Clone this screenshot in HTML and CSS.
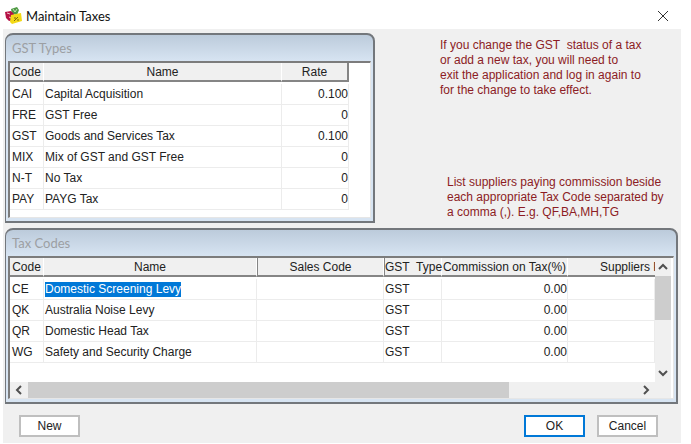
FILE: index.html
```html
<!DOCTYPE html>
<html lang="en">

<head>
    <meta charset="utf-8">
    <meta name="viewport" content="width=device-width, initial-scale=1.0">
    <title>Maintain Taxes</title>
    <link rel="stylesheet" href="styles.css">
</head>

<body>
    <header class="titlebar">
        <svg class="logo" width="18" height="18" viewBox="0 0 18 18" aria-hidden="true">
            <path d="M6 2l6-2 2 3-2 5-5-1z" fill="#4f9a45" />
            <path d="M8 2l2 3 2-3" fill="none" stroke="#c4dfb6" />
            <path d="M0 5l6-1 3 3-1 6-4 1-3-3z" fill="#b51245" />
            <path d="M2 6l3 1M4 10l2 1" stroke="#f0c0cc" />
            <path d="M6 8l10-2 1 8-10 3-2-2z" fill="#f3d916" />
            <path d="M9 14l4-4M9 11h2M12 13h2" stroke="#7a6a10" />
        </svg>
        <h1>Maintain Taxes</h1>
        <button class="close" aria-label="Close">
            <svg width="12" height="12" viewBox="0 0 12 12"><path d="M1 1l10 10M11 1L1 11" /></svg>
        </button>
    </header>

    <main class="dialog">
        <div class="top">
            <section class="panel">
                <h2>GST Types</h2>
                <div class="frame types">
                    <table>
                        <colgroup>
                            <col class="code">
                            <col>
                            <col class="rate">
                        </colgroup>
                        <thead>
                            <tr><th>Code</th><th>Name</th><th class="last">Rate</th></tr>
                        </thead>
                        <tbody>
                            <tr><td>CAI</td><td>Capital Acquisition</td><td class="num">0.100</td></tr>
                            <tr><td>FRE</td><td>GST Free</td><td class="num">0</td></tr>
                            <tr><td>GST</td><td>Goods and Services Tax</td><td class="num">0.100</td></tr>
                            <tr><td>MIX</td><td>Mix of GST and GST Free</td><td class="num">0</td></tr>
                            <tr><td>N-T</td><td>No Tax</td><td class="num">0</td></tr>
                            <tr><td>PAY</td><td>PAYG Tax</td><td class="num">0</td></tr>
                        </tbody>
                    </table>
                </div>
            </section>
            <div class="notes">
                <p>If you change the GST&nbsp; status of a tax<br>or add a new tax, you will need to<br>exit the application and log in again to<br>for the change to take effect.</p>
                <p class="commission">List suppliers paying commission beside<br>each appropriate Tax Code separated by<br>a comma (,). E.g. QF,BA,MH,TG</p>
            </div>
        </div>

        <section class="panel">
            <h2>Tax Codes</h2>
            <div class="frame codes">
                <div class="view">
                    <table>
                        <colgroup>
                            <col class="code">
                            <col>
                            <col class="sales">
                            <col class="type">
                            <col class="comm">
                            <col class="suppliers">
                        </colgroup>
                        <thead>
                            <tr>
                                <th>Code</th>
                                <th>Name</th>
                                <th class="edge">Sales Code</th>
                                <th class="edge">GST&nbsp; Type</th>
                                <th>Commission on Tax(%)</th>
                                <th class="cut">Suppliers P</th>
                            </tr>
                        </thead>
                        <tbody>
                            <tr>
                                <td>CE</td>
                                <td><input class="editing" type="text" aria-label="Name" value="Domestic Screening Levy"></td>
                                <td></td><td>GST</td><td class="num">0.00</td><td></td>
                            </tr>
                            <tr><td>QK</td><td>Australia Noise Levy</td><td></td><td>GST</td><td class="num">0.00</td><td></td></tr>
                            <tr><td>QR</td><td>Domestic Head Tax</td><td></td><td>GST</td><td class="num">0.00</td><td></td></tr>
                            <tr><td>WG</td><td>Safety and Security Charge</td><td></td><td>GST</td><td class="num">0.00</td><td></td></tr>
                        </tbody>
                    </table>
                </div>
                <div class="vscroll">
                    <button aria-label="Scroll up"><svg width="10" height="8" viewBox="0 0 10 8"><path d="M1 6l4-4 4 4" /></svg></button>
                    <div class="track"><div class="thumb"></div></div>
                    <button aria-label="Scroll down"><svg width="10" height="8" viewBox="0 0 10 8"><path d="M1 2l4 4 4-4" /></svg></button>
                </div>
                <div class="hscroll">
                    <button aria-label="Scroll left"><svg width="8" height="10" viewBox="0 0 8 10"><path d="M6 1L2 5l4 4" /></svg></button>
                    <div class="track"><div class="thumb"></div></div>
                    <button aria-label="Scroll right"><svg width="8" height="10" viewBox="0 0 8 10"><path d="M2 1l4 4-4 4" /></svg></button>
                </div>
            </div>
        </section>

        <footer class="actions">
            <button class="btn">New</button>
            <button class="btn primary">OK</button>
            <button class="btn">Cancel</button>
        </footer>
    </main>
</body>

</html>
```

FILE: styles.css
```css
* {
    box-sizing: border-box;
}

body {
    margin: 0;
    background-color: #fff;
    color: #222;
    font-family: "Liberation Sans", Arial, sans-serif;
    font-size: 12px;
}

h1,
h2,
p {
    margin: 0;
    font-weight: normal;
}

button,
input {
    font: inherit;
    color: inherit;
}

/* title bar */
.titlebar {
    display: flex;
    align-items: center;
    height: 29px;
    padding: 2px 20px 0 5px;
}

.titlebar h1 {
    flex: 1;
    margin-left: 3px;
    font-family: Lato, "Segoe UI", sans-serif;
    font-size: 13px;
    color: #111;
}

.close {
    display: flex;
    padding: 2px;
    border: none;
    background: none;
}

.close path {
    stroke: #333;
}

.dialog {
    margin: 0 10px 0 3px;
    padding: 4px 3px 6px 2px;
    background-color: #f0f0f0;
}

.top {
    display: flex;
    margin-bottom: 5px;
}

.top .panel {
    flex: 0 1 370px;
}

/* panels */
.panel {
    padding: 0 2px 3px 2px;
    border: 2px solid #73777c;
    border-left-width: 1px;
    border-radius: 8px 8px 0 0;
    background: linear-gradient(#bccbdb, #d7e4f2 26px);
}

.panel h2 {
    height: 26px;
    padding-left: 4px;
    font-family: Lato, "Segoe UI", sans-serif;
    font-size: 13px;
    line-height: 26px;
    color: #9c9fa3;
}

.frame {
    border-top: 2px solid #7c7c7c;
    border-left: 2px solid #7c7c7c;
    border-right: 1px solid #e6e6e6;
    border-bottom: 1px solid #e6e6e6;
    background-color: #fff;
}

.types {
    padding: 0 21px 7px 0;
}

/* tables */
table {
    width: 100%;
    border-spacing: 0;
    table-layout: fixed;
}

.code {
    width: 34px;
}

.rate {
    width: 67px;
}

.sales {
    width: 127px;
}

.type {
    width: 58px;
}

.comm {
    width: 126px;
}

.suppliers {
    width: 87px;
}

th {
    height: 19px;
    padding: 1px 0 0;
    border-right: 1px solid #fff;
    border-bottom: 2px solid #858585;
    background-color: #f0f0f0;
    font-weight: normal;
    line-height: 16px;
    white-space: nowrap;
}

th.last {
    border-right: 2px solid #858585;
}

th.edge {
    border-left: 1px solid #858585;
}

th.cut {
    padding-left: 32px;
    border-right: none;
    overflow: hidden;
    text-align: left;
}

tbody::before {
    content: "";
    display: table-row;
    height: 2px;
}

td {
    height: 21px;
    padding: 0 2px;
    border-right: 1px solid #ececec;
    border-bottom: 1px solid #ececec;
    line-height: 20px;
    white-space: nowrap;
}

td + td {
    padding: 0 1px;
}

td.num {
    padding: 0;
    text-align: right;
}

.editing {
    display: block;
    width: 136px;
    height: 15px;
    padding: 0;
    border: none;
    background-color: #0078d7;
    color: #fff;
}

/* notes */
.notes {
    flex: 1;
    padding: 5px 0 0 65px;
    line-height: 15px;
    color: #8c1c24;
    white-space: nowrap;
}

.commission {
    margin: 77px 0 0 7px;
}

/* scrolling grid */
.codes {
    display: grid;
    grid-template: 124px 16px / 1fr 16px;
    padding-right: 2px;
}

.view {
    overflow: hidden;
}

.vscroll,
.hscroll {
    display: flex;
    background-color: #f0f0f0;
}

.vscroll {
    flex-direction: column;
}

.hscroll {
    grid-column: 1 / -1;
    padding-right: 16px;
}

.vscroll button,
.hscroll button {
    display: flex;
    align-items: center;
    justify-content: center;
    width: 18px;
    height: 16px;
    padding: 0;
    border: none;
    background: none;
}

.vscroll button {
    width: 16px;
    height: 18px;
}

.track {
    flex: 1;
}

.vscroll path,
.hscroll path {
    fill: none;
    stroke: #505050;
    stroke-width: 2;
}

.thumb {
    background-color: #cdcdcd;
}

.vscroll .thumb {
    height: 50%;
}

.hscroll .thumb {
    width: 79%;
    height: 100%;
}

/* buttons */
.actions {
    display: flex;
    gap: 12px;
    padding: 11px 20px 0 14px;
}

.btn {
    width: 61px;
    height: 22px;
    padding: 0;
    border: 2px solid #bfbfbf;
    background-color: #fff;
}

.btn.primary {
    margin-left: auto;
    border-color: #0078d7;
}
```
